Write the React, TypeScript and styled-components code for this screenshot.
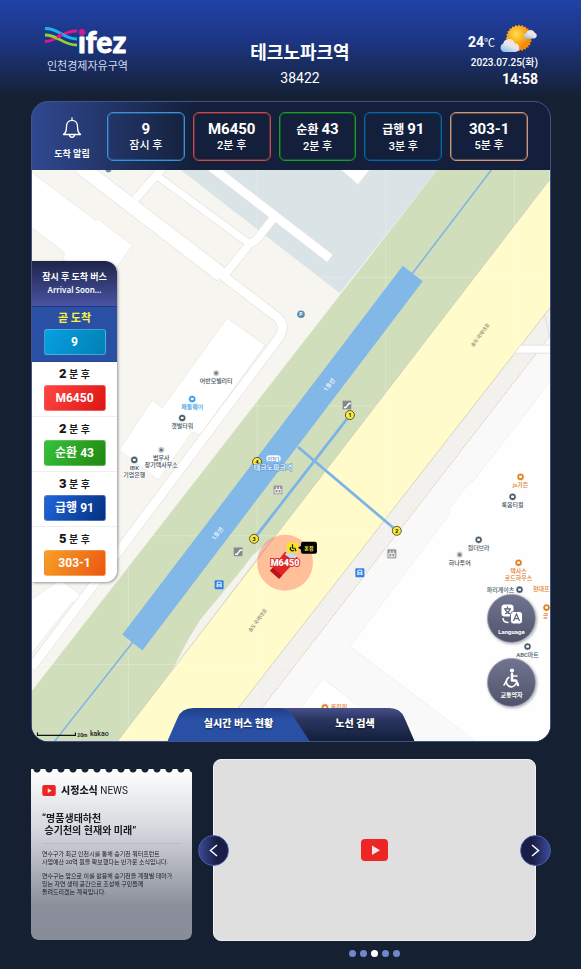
import React, { useState } from 'react';
import styled, { createGlobalStyle } from 'styled-components';

const GlobalStyle = createGlobalStyle`
  *, *::before, *::after { box-sizing: border-box; }
  body {
    margin: 0;
    background: #152033;
    color: #fff;
    font-family: Roboto, "Noto Sans CJK KR", sans-serif;
  }
  button { font: inherit; color: inherit; border: 0; padding: 0; background: none; cursor: pointer; }
  h1, h2, p, ul, ol { margin: 0; padding: 0; list-style: none; }
  svg { display: block; }
`;

const Page = styled.main`
  min-height: 100vh;
  padding: 0 30px 11px 31px;
  background: linear-gradient(#2042a8 0, #1d3684 40px, #152033 98px);
`;

/* ---------- header ---------- */

const Header = styled.header`
  display: flex;
  justify-content: space-between;
  height: 101px;
  padding: 0 13px;
`;

const Brand = styled.div`
  padding-top: 24px;
`;

const BrandName = styled.p`
  padding-left: 3px;
  font-size: 11px;
  line-height: 14px;
  color: #d5dbf0;
`;

const Station = styled.div`
  padding-top: 41px;
  text-align: center;
`;

const StationName = styled.h1`
  font-size: 18px;
  font-weight: 700;
  line-height: 24px;
`;

const StationCode = styled.p`
  font-size: 14px;
  line-height: 26px;
`;

const Status = styled.div`
  display: flex;
  flex-direction: column;
  align-items: flex-end;
  padding-top: 22px;
`;

const Weather = styled.div`
  display: flex;
  align-items: flex-end;
  gap: 4px;
  height: 31px;
`;

const Temperature = styled.p`
  font-size: 14px;
  font-weight: 700;
  line-height: 18px;
  small { font-size: 11px; font-weight: 400; }
`;

const DateText = styled.p`
  font-size: 10px;
  font-weight: 500;
  line-height: 19px;
`;

const Clock = styled.p`
  font-size: 14px;
  font-weight: 700;
  line-height: 14px;
`;

/* ---------- main panel ---------- */

const Panel = styled.section`
  overflow: hidden;
  border: 1px solid #3f5488;
  border-radius: 17px;
  background: linear-gradient(90deg, #304890 0, #14203b 160px);
`;

const AlertBar = styled.div`
  display: flex;
  align-items: center;
  height: 68px;
  padding: 0 22px 0 5px;
`;

const AlertTitle = styled.div`
  display: flex;
  flex-direction: column;
  align-items: center;
  gap: 8px;
  width: 70px;
  padding-top: 6px;
  font-size: 9px;
  font-weight: 700;
  line-height: 14px;
`;

const AlertList = styled.ul`
  flex: 1;
  display: grid;
  grid-template-columns: repeat(5, 1fr);
  gap: 8px;
`;

const AlertCard = styled.li<{ $line: string }>`
  display: flex;
  flex-direction: column;
  align-items: center;
  height: 49px;
  padding-top: 7px;
  border: 1px solid ${(p) => p.$line};
  border-radius: 6px;
  box-shadow: inset 0 0 0 1px ${(p) => p.$line}60;
  font-size: 11px;
  line-height: 16px;
  font-weight: 500;
`;

const RouteName = styled.strong`
  font-size: 15px;
  line-height: 18px;
  font-weight: 700;
  span { font-size: 12px; }
`;

const MapArea = styled.div`
  position: relative;
  aspect-ratio: 519 / 572;
  background: #f7f5f0;
`;

const MapDrawing = styled.svg`
  width: 100%;
  height: 100%;
  font-family: Roboto, "Noto Sans CJK KR", sans-serif;
  font-size: 6px;
  font-weight: 500;
  text-anchor: middle;
`;

/* ---------- arrival list over the map ---------- */

const Arrivals = styled.aside`
  position: absolute;
  top: 91px;
  left: 0;
  width: 85px;
  overflow: hidden;
  border-radius: 0 12px 12px 0;
  background: #fff;
  box-shadow: 1px 1px 3px #0006;
`;

const ArrivalsHead = styled.div`
  height: 46px;
  padding-top: 9px;
  background: linear-gradient(#1e2448, #4953a2);
  border-bottom: 1px solid #24397c;
  text-align: center;
  font-family: "Noto Sans", sans-serif;
  font-size: 8px;
  font-weight: 600;
  line-height: 12px;
  h2 { font: 700 9px/14px Roboto, "Noto Sans CJK KR", sans-serif; }
`;

const ArrivalRow = styled.li<{ $now?: boolean }>`
  display: flex;
  flex-direction: column;
  align-items: center;
  height: 55px;
  padding-top: 3px;
  border-bottom: 1px solid ${(p) => (p.$now ? '#244894' : '#eee')};
  background: ${(p) => (p.$now ? '#2950a5' : '#fff')};
  color: ${(p) => (p.$now ? '#fff23a' : '#181818')};
  font-size: ${(p) => (p.$now ? '11px' : '10px')};
  font-weight: 700;
  line-height: 18px;
  b { font-size: 13px; }
  &:last-child { border: 0; }
`;

const RouteButton = styled.button<{ $from: string; $to: string }>`
  width: 62px;
  height: 26px;
  margin-top: 1px;
  border-radius: 3px;
  border: 1px solid #ffffff40;
  background: linear-gradient(120deg, ${(p) => p.$from}, ${(p) => p.$to});
  color: #fff;
  font-size: 12px;
  font-weight: 700;
  line-height: 22px;
`;

/* ---------- round buttons and tabs over the map ---------- */

const Tools = styled.div`
  position: absolute;
  right: 14px;
  bottom: 34px;
  display: grid;
  gap: 15px;
`;

const ToolButton = styled.button`
  display: flex;
  flex-direction: column;
  align-items: center;
  width: 49px;
  height: 49px;
  padding-top: 9px;
  border: 1px solid #9094a8;
  border-radius: 50%;
  background: linear-gradient(#70748f, #50546b);
  box-shadow: 1px 1px 3px #0005;
  font-size: 6px;
  font-weight: 700;
  line-height: 11px;
  svg { margin-bottom: 1px; }
`;

const Tabs = styled.div`
  position: absolute;
  left: 50%;
  bottom: 0;
  display: flex;
  transform: translateX(-50%);
`;

const Tab = styled.button<{ $first: boolean }>`
  position: relative;
  width: ${(p) => (p.$first ? '142px' : '145px')};
  height: 33px;
  margin-left: ${(p) => (p.$first ? '0' : '-40px')};
  padding-left: ${(p) => (p.$first ? '0' : '26px')};
  z-index: ${(p) => (p.$first ? 1 : 0)};
  font-size: 10px;
  font-weight: 900;
  line-height: 32px;
  span { position: relative; text-shadow: 0 1px 2px #0008; }
`;

const TabShape = styled.svg`
  position: absolute;
  inset: 0;
  width: 100%;
  height: 100%;
`;

/* ---------- bottom area ---------- */

const Bottom = styled.section`
  display: grid;
  grid-template-columns: 1fr 2fr;
  gap: 21px;
  padding: 17px 15px 0 0;
`;

const NewsCard = styled.article`
  align-self: start;
  height: 171px;
  margin-top: 10px;
  padding: 14px 10px 0 11px;
  border-radius: 0 0 7px 7px;
  background: linear-gradient(#fff, #d5d8dd 35%, #8b8f9b 80%, #878c99);
  mask: radial-gradient(circle at 50% 0, transparent 3px, #000 4px) 0 0 / 12px 100%;
  color: #191b20;
`;

const NewsTitle = styled.h2`
  display: flex;
  align-items: center;
  gap: 5px;
  font-size: 10px;
  font-weight: 900;
  line-height: 16px;
  small { font-size: 10px; font-weight: 400; }
`;

const Headline = styled.p`
  margin-top: 14px;
  padding-bottom: 6px;
  border-bottom: 1px solid #b9bdc5;
  font-size: 10px;
  font-weight: 700;
  line-height: 12px;
  white-space: pre;
`;

const NewsText = styled.p`
  margin-top: 6px;
  font-size: 6px;
  line-height: 8px;
  white-space: pre;
`;

const Carousel = styled.div`
  min-width: 0;
`;

const Video = styled.div`
  position: relative;
  display: flex;
  align-items: center;
  justify-content: center;
  height: 182px;
  border: 1px solid #f2f0f0;
  border-radius: 8px;
  background: #dfdfdf;
`;

const ArrowButton = styled.button<{ $side: 'left' | 'right' }>`
  position: absolute;
  top: 75px;
  ${(p) => p.$side}: -16px;
  display: grid;
  place-items: center;
  width: 31px;
  height: 31px;
  border: 1px solid #4a5ba5;
  border-radius: 50%;
  background: linear-gradient(${(p) => (p.$side === 'left' ? '90deg' : '270deg')}, #3a4a98, #1a1e46 60%);
`;

const Dots = styled.div`
  display: flex;
  justify-content: center;
  gap: 4px;
  padding-top: 9px;
`;

const Dot = styled.button<{ $on: boolean }>`
  width: 7px;
  height: 7px;
  border-radius: 50%;
  background: ${(p) => (p.$on ? '#fff' : '#6f88cb')};
`;

/* ---------- drawings ---------- */

const Logo = () => (
  <svg width="88" height="36" viewBox="44 24 88 36" role="img" aria-label="ifez">
    <g fill="none" strokeWidth="2.8">
      <path d="M45 41.500C58 41 61 31 77 31" stroke="#e6148c" />
      <path d="M45 28.500C59 28 62 38.500 77 39" stroke="#18b4f0" />
      <path d="M45 35C59 35 62 45 77 45" stroke="#94d32d" />
      <path d="M57 37.500l5-3.500" stroke="#e6148c" />
    </g>
    <text x="78" y="53" fill="#fff" stroke="#fff" strokeWidth="0.8" strokeLinejoin="round" fontFamily="Lato, sans-serif" fontSize="30" fontWeight="900">ifez</text>
    <circle cx="82" cy="32" r="3.400" fill="#e6148c" stroke="#1e3a90" strokeWidth="0.8" />
  </svg>
);

const SUN_RAYS = Array.from({ length: 48 }, (_, i) => {
  const r = i % 2 ? 11.8 : 13.4;
  const a = (i * Math.PI) / 24;
  return `${(20 + r * Math.cos(a)).toFixed(1)},${(14 + r * Math.sin(a)).toFixed(1)}`;
}).join(' ');

const WeatherIcon = () => (
  <svg width="39" height="29" viewBox="0 0 39 29" role="img" aria-label="구름 조금">
    <defs>
      <radialGradient id="sun" cx="0.4" cy="0.35">
        <stop offset="0" stopColor="#ffe04a" />
        <stop offset="1" stopColor="#f88a08" />
      </radialGradient>
      <linearGradient id="cloud" x1="0.8" y1="0" x2="0.2" y2="1">
        <stop offset="0" stopColor="#ffe6c4" />
        <stop offset="0.5" stopColor="#e5e6ef" />
        <stop offset="1" stopColor="#8fc0ef" />
      </linearGradient>
    </defs>
    <polygon points={SUN_RAYS} fill="url(#sun)" />
    <path d="M5 28a4.500 4.500 0 0 1-.8-8.500 6 6 0 0 1 11.500-.3 4.500 4.500 0 0 1 1.300 8.800z" fill="url(#cloud)" />
    <path d="M27.500 14.500a2.500 2.500 0 0 1-.2-5 4.500 4.500 0 0 1 8.500-.8 3 3 0 0 1-.5 5.800z" fill="url(#cloud)" />
  </svg>
);

const Bell = () => (
  <svg width="20" height="22" viewBox="0 0 20 22" fill="none" stroke="#fff" strokeWidth="1.300" strokeLinecap="round" strokeLinejoin="round">
    <path d="M10 1v2M1.500 17.500c2-2 3-3 3-8C4.500 5.500 7 3.300 10 3.300s5.500 2.200 5.500 6.200c0 5 1 6 3 8z" />
    <path d="M7.500 18c.3 3 4.700 3 5 0" />
  </svg>
);

const PlayMark = ({ width }: { width: number }) => (
  <svg width={width} height={Math.round(width * 0.8)} viewBox="0 0 27 22">
    <rect width="27" height="22" rx="4" fill="#ed2525" />
    <path d="M11 6.500v9.500l8-4.700z" fill="#f1e9e9" />
  </svg>
);

const LanguageIcon = () => (
  <svg width="22" height="21" viewBox="0 0 22 21">
    <rect x="0.500" y="0.500" width="12" height="12" rx="3" fill="#fff" />
    <path d="M6.500 2.500v1.800M3 4.800h7M4 10c3-1 4.500-3 5-5M4.300 5.500C5 7.500 6.500 9 9.500 10" fill="none" stroke="#5c607a" strokeWidth="1.200" />
    <path d="M2 14c0 3 2 4.500 5.500 4.500" fill="none" stroke="#fff" strokeWidth="1.500" />
    <rect x="9.500" y="7.500" width="12" height="12.500" rx="3" fill="#fff" stroke="#61657e" />
    <path d="M12.500 17l3-7 3 7M13.500 14.700h4" fill="none" stroke="#5c607a" strokeWidth="1.200" />
  </svg>
);

const WheelchairIcon = () => (
  <svg width="18" height="20" viewBox="0 0 18 20" fill="none" stroke="#fff" strokeLinecap="round" strokeLinejoin="round">
    <circle cx="9" cy="2.600" r="2.100" fill="#fff" stroke="none" />
    <path d="M9 6v6.500h4l2 4.500" strokeWidth="2.500" />
    <path d="M9 8h5" strokeWidth="1.500" />
    <path d="M5.800 9.500a5 5 0 1 0 7 6.500" strokeWidth="1.700" />
    <path d="M3.500 13L1 17" strokeWidth="1.500" />
  </svg>
);

type Poi = { x: number; y: number; lines: string[]; color?: string; dim?: boolean; dx?: number; dy?: number };

const POIS: Poi[] = [
  { x: 216, y: 373, lines: ['어반모빌리티'], dim: true },
  { x: 192, y: 399, lines: ['패들웨이'], color: '#2c9be0' },
  { x: 182, y: 418, lines: ['갯벌타워'] },
  { x: 161, y: 450, lines: ['법무사', '장기택사무소'], dim: true },
  { x: 134, y: 460, lines: ['IBK', '기업은행'] },
  { x: 521, y: 477, lines: ['js가든'], color: '#e07b1c' },
  { x: 513, y: 497, lines: ['룩옵티컬'] },
  { x: 479, y: 540, lines: ['원더브라'] },
  { x: 460, y: 555, lines: ['하나투어'], dim: true },
  { x: 519, y: 563, lines: ['텍사스', '로드하우스'], color: '#e07b1c' },
  { x: 520, y: 590, lines: ['파리게이츠'], dx: -19, dy: -8 },
  { x: 528, y: 647, lines: ['ABC마트'] },
  { x: 547, y: 608, lines: ['공'], color: '#e07b1c', dx: -1 },
  { x: 325, y: 708, lines: ['롤링핀'], color: '#e07b1c', dx: 14, dy: -8 },
];

const PoiMark = ({ x, y, lines, color = '#455765', dim, dx = 0, dy = 0 }: Poi) => (
  <g>
    <circle cx={x} cy={y} r={dim ? 3.2 : 3.6} fill={dim ? '#b9bdc0' : color} stroke="#fff" strokeWidth="0.6" />
    {dim ? <circle cx={x} cy={y} r="1.200" fill="#58636b" /> : <rect x={x - 1.5} y={y - 1.3} width="3" height="2.400" rx="0.800" fill="#fff" />}
    {lines.map((line, i) => (
      <text key={line} x={x + dx} y={y + dy + 10 + i * 7} fill={dim ? '#3d4a54' : color} stroke="#fff" strokeWidth="1" paintOrder="stroke">{line}</text>
    ))}
  </g>
);

const EXITS = [
  { n: 1, x: 350, y: 415 },
  { n: 2, x: 397, y: 531 },
  { n: 3, x: 254, y: 539 },
  { n: 4, x: 257, y: 462 },
];

const STAIRS = [[347, 405], [238, 552]];
const LIFTS = [[278, 490], [392, 554]];
const STOPS = [[219, 585], [360, 573]];

const StationMap = () => (
  <MapDrawing viewBox="31.500 169.500 519 572" preserveAspectRatio="xMidYMid slice" role="img" aria-label="테크노파크역 주변 지도">
    <path d="M31 169H551V742H31z" fill="#f7f5f0" />
    <path d="M180 169L340 293L438 169z" fill="#dae3e6" />
    <g fill="#fff" stroke="#eae8e4" strokeWidth="0.7">
      <path d="M31 172L95 220L98 219L132 245L112 273L63 260L64 252L31 227z" />
      <path d="M227 318L265 345L200 435L192 432L158 480L119 450L152 400L162 408z" />
      <path d="M31 600L60 580L84 598L76 606L72 602L31 654z" />
      <path d="M341 169L358 184L370 169z" />
    </g>
    {[{ c: '#e2e0dc', e: 1.2 }, { c: '#fff', e: 0 }].map(({ c, e }) => (
      <g key={c} fill="none" stroke={c} strokeLinejoin="round">
        <path d="M80 166L222 275" strokeWidth={14.5 + e} />
        <path d="M222 275L276 316Q286 324 280 336L31 668" strokeWidth={9 + e} />
        <path d="M168 161L135 199" strokeWidth={8 + e} />
        <path d="M155 174L250 244" strokeWidth={7 + e} />
        <path d="M225 274L250 243L256 240L274 217" strokeWidth={8 + e} />
        <path d="M208 164L330 258" strokeWidth={9 + e} />
      </g>
    ))}
    <circle cx="108" cy="169" r="3" fill="#5a90ac" />

    <path d="M438 169L31 692V742H118L550 180V169z" fill="#d0debb" />
    <path d="M272 539L252 556L244 567L200 620L188 640L170 674z" fill="#f5f3ee" />
    <path d="M551 306L551 742H212z" fill="#f3f1ed" />
    <path d="M551 335V742H236z" fill="#f9f9f9" />
    <path d="M551 335L236 742" stroke="#d9c3a8" strokeWidth="0.800" strokeDasharray="2 1" />
    <path d="M551 178V307L212 742H117z" fill="#fffbcb" stroke="#cfcbb9" strokeWidth="0.800" />
    <path d="M545 314L551 340" stroke="#d9d7d3" strokeWidth="0.700" fill="none" />
    <path d="M552 345H521L515 353H552" fill="#fff" stroke="#dedbd7" strokeWidth="0.700" />
    <path d="M551 381L473 482H470L448 511L450 514L350 647L476 742H551z" fill="#fefefe" stroke="#ececec" strokeWidth="0.700" />
    <path d="M323 679L300 710L320 742H405z" fill="#fff" stroke="#ececec" strokeWidth="0.700" />
    <g stroke="#ffffff40" strokeWidth="1">
      <path d="M31 277H551M31 406H551M31 536H551M31 665H551M128 169V742M257 169V742M386 169V742M515 169V742" />
    </g>

    <g stroke="#7db4e6" fill="none">
      <path d="M492 169L412 274M133 642L54 742" strokeWidth="1.500" />
      <path d="M350 415L254 539M298 447L397 531" strokeWidth="2.800" />
    </g>
    <path d="M403 265.500L423 281L142 651L122 635z" fill="#82b8e8" />

    <g fill="#fff">
      <text transform="translate(331 386) rotate(-53)">1호선</text>
      <text transform="translate(219 535) rotate(-53)">1호선</text>
    </g>
    <g fill="#8d8a72" fontSize="5">
      <text transform="translate(482 336) rotate(-53)">송도국제대로</text>
      <text transform="translate(259 622) rotate(-53)">송도국제대로</text>
    </g>
    <g fill="#5a90ac">
      <circle cx="301" cy="314" r="3.800" />
      <text x="301" y="316" fill="#fff" fontSize="5" fontWeight="700">P</text>
    </g>

    {STAIRS.map(([x, y]) => (
      <g key={x}>
        <rect x={x - 4.5} y={y - 4.5} width="9" height="9" rx="1" fill="#85888b" stroke="#c5c7c5" strokeWidth="0.600" />
        <path d={`M${x - 3} ${y + 2.500}h2l3-4h2`} stroke="#fff" strokeWidth="1.400" fill="none" />
      </g>
    ))}
    {LIFTS.map(([x, y]) => (
      <g key={x}>
        <rect x={x - 4.5} y={y - 4.5} width="9" height="9" rx="1" fill="#929495" stroke="#c5c7c5" strokeWidth="0.600" />
        <path d={`M${x - 1.500} ${y - 3}v2M${x + 1.500} ${y - 3}v2M${x - 3} ${y - 0.500}h6v3.500h-6zM${x} ${y - 0.500}v3.500`} stroke="#fff" strokeWidth="0.900" fill="none" />
      </g>
    ))}
    {STOPS.map(([x, y]) => (
      <g key={x}>
        <rect x={x - 4.5} y={y - 4.5} width="9" height="9" rx="1" fill="#2f80e8" />
        <path d={`M${x - 2} ${y + 2.500}v-5h4v5M${x - 2} ${y}h4M${x - 2.500} ${y + 1.500}h5`} stroke="#fff" strokeWidth="0.900" fill="none" />
      </g>
    ))}
    {EXITS.map(({ n, x, y }) => (
      <g key={n}>
        <circle cx={x} cy={y} r="4.500" fill="#fbe93b" stroke="#4b4820" strokeWidth="0.900" />
        <text x={x} y={y + 2} fill="#222" fontWeight="700">{n}</text>
      </g>
    ))}
    <rect x="266" y="455" width="15" height="7" rx="3.500" fill="#fff" stroke="#7db4e6" strokeWidth="0.600" />
    <text x="273.500" y="461" fontSize="5" fill="#4e91d2">인천1</text>
    <text x="273" y="470" fontSize="7" fill="#fff" stroke="#5d9bd6" strokeWidth="1.200" paintOrder="stroke">테크노파크역</text>

    {POIS.map((p) => <PoiMark key={p.lines[0]} {...p} />)}
    <text x="550" y="591" fill="#e07b1c" textAnchor="end">현대프</text>

    <circle cx="285" cy="563" r="28" fill="#ff4f3c" fillOpacity="0.350" />
    <path d="M270 571L285 552L298 558L295 562L279 579z" fill="#e42323" />
    <path d="M270 571L279 579L282 576L273 568z" fill="#b9141a" />
    <path d="M287 552L297 556L294 561L285 555z" fill="#c8dcec" />
    <rect x="287" y="543" width="11" height="10" fill="#f8e71c" />
    <g fill="none" stroke="#1b1b1b" strokeWidth="1.200">
      <path d="M292.500 544.500v4h2.500l1 3M291 547.500a2 2 0 1 0 3 3" />
    </g>
    <path d="M298 548L301 546V550z" fill="#000" />
    <rect x="301" y="542" width="16" height="12" rx="2" fill="#000" />
    <text x="309" y="550" fill="#ffee3d" fontSize="5" fontWeight="700">혼잡</text>
    <text x="285" y="566" fontSize="9" fontWeight="900" fill="#fff" stroke="#d92b2b" strokeWidth="2" paintOrder="stroke">M6450</text>

    <path d="M37 733V736H75V733" fill="none" stroke="#111" strokeWidth="1.200" />
    <text x="82" y="738" fontSize="5" fontWeight="700" fill="#222">20m</text>
    <text x="99" y="737" fontSize="7" fill="#222">kakao</text>
  </MapDrawing>
);

/* ---------- data ---------- */

const ALERTS = [
  { prefix: '', no: '9', wait: '잠시 후', line: '#3693d8' },
  { prefix: '', no: 'M6450', wait: '2분 후', line: '#c9494f' },
  { prefix: '순환', no: '43', wait: '2분 후', line: '#17a01f' },
  { prefix: '급행', no: '91', wait: '3분 후', line: '#0865a8' },
  { prefix: '', no: '303-1', wait: '5분 후', line: '#d19873' },
];

const ARRIVALS = [
  { min: 0, route: '9', from: '#08a0e2', to: '#0080b4' },
  { min: 2, route: 'M6450', from: '#ff4640', to: '#dc1515' },
  { min: 2, route: '순환 43', from: '#34c33a', to: '#238610' },
  { min: 3, route: '급행 91', from: '#1f66de', to: '#05307e' },
  { min: 5, route: '303-1', from: '#f8a026', to: '#ea5712' },
];

const TABS = [
  { label: '실시간 버스 현황', shape: 'M0 33L10 10Q14 0 26 0H108Q122 0 127 10L142 33z', width: 142 },
  { label: '노선 검색', shape: 'M20 33L0 0H120Q131 0 135 10L145 33z', width: 145 },
];

export default function App() {
  const [tab, setTab] = useState(0);
  const [slide, setSlide] = useState(2);

  return (
    <>
      <GlobalStyle />
      <Page>
        <Header>
          <Brand>
            <Logo />
            <BrandName>인천경제자유구역</BrandName>
          </Brand>
          <Station>
            <StationName>테크노파크역</StationName>
            <StationCode>38422</StationCode>
          </Station>
          <Status>
            <Weather>
              <Temperature>24<small>℃</small></Temperature>
              <WeatherIcon />
            </Weather>
            <DateText>2023.07.25(화)</DateText>
            <Clock>14:58</Clock>
          </Status>
        </Header>

        <Panel>
          <AlertBar>
            <AlertTitle><Bell />도착 알림</AlertTitle>
            <AlertList>
              {ALERTS.map((a) => (
                <AlertCard key={a.no} $line={a.line}>
                  <RouteName>{a.prefix && <span>{a.prefix} </span>}{a.no}</RouteName>
                  {a.wait}
                </AlertCard>
              ))}
            </AlertList>
          </AlertBar>
          <MapArea>
            <StationMap />
            <Arrivals>
              <ArrivalsHead>
                <h2>잠시 후 도착 버스</h2>
                Arrival Soon...
              </ArrivalsHead>
              <ul>
                {ARRIVALS.map((a) => (
                  <ArrivalRow key={a.route} $now={a.min === 0}>
                    <span>{a.min ? <><b>{a.min}</b> 분 후</> : '곧 도착'}</span>
                    <RouteButton $from={a.from} $to={a.to}>{a.route}</RouteButton>
                  </ArrivalRow>
                ))}
              </ul>
            </Arrivals>
            <Tools>
              <ToolButton><LanguageIcon />Language</ToolButton>
              <ToolButton><WheelchairIcon />교통약자</ToolButton>
            </Tools>
            <Tabs role="tablist">
              {TABS.map((t, i) => (
                <Tab key={t.label} role="tab" aria-selected={tab === i} $first={i === 0} onClick={() => setTab(i)}>
                  <TabShape viewBox={`0 0 ${t.width} 33`} preserveAspectRatio="none">
                    <defs>
                      <linearGradient id={`tab${i}`} x1="0" y1="0" x2="0" y2="1">
                        <stop offset="0" stopColor={tab === i ? '#203f88' : '#46508a'} />
                        <stop offset="0.350" stopColor={tab === i ? '#2950a5' : '#2a3560'} />
                        <stop offset="1" stopColor={tab === i ? '#2950a5' : '#131f3b'} />
                      </linearGradient>
                    </defs>
                    <path d={t.shape} fill={`url(#tab${i})`} />
                  </TabShape>
                  <span>{t.label}</span>
                </Tab>
              ))}
            </Tabs>
          </MapArea>
        </Panel>

        <Bottom>
          <NewsCard>
            <NewsTitle><PlayMark width={14} /><span>시정소식 <small>NEWS</small></span></NewsTitle>
            <Headline>{'“명품생태하천\n 승기천의 현재와 미래”'}</Headline>
            <NewsText>{'연수구가 최근 인천시를 통해 승기천 워터프런트\n사업예산 20억 원을 확보했다는 반가운 소식입니다.'}</NewsText>
            <NewsText>{'연수구는 앞으로 이를 활용해 승기천을 계절별 테마가\n있는 자연 생태 공간으로 조성해 구민들께\n돌려드리겠는 계획입니다.'}</NewsText>
          </NewsCard>
          <Carousel>
            <Video>
              <PlayMark width={27} />
              <ArrowButton $side="left" aria-label="이전" onClick={() => setSlide((slide + 4) % 5)}>
                <svg width="9" height="13" viewBox="0 0 9 13" fill="none" stroke="#fff" strokeWidth="1.500"><path d="M8 1L1.500 6.500L8 12" /></svg>
              </ArrowButton>
              <ArrowButton $side="right" aria-label="다음" onClick={() => setSlide((slide + 1) % 5)}>
                <svg width="9" height="13" viewBox="0 0 9 13" fill="none" stroke="#fff" strokeWidth="1.500"><path d="M1 1L7.500 6.500L1 12" /></svg>
              </ArrowButton>
            </Video>
            <Dots>
              {[0, 1, 2, 3, 4].map((i) => (
                <Dot key={i} $on={i === slide} aria-label={`${i + 1}번 영상`} onClick={() => setSlide(i)} />
              ))}
            </Dots>
          </Carousel>
        </Bottom>
      </Page>
    </>
  );
}
